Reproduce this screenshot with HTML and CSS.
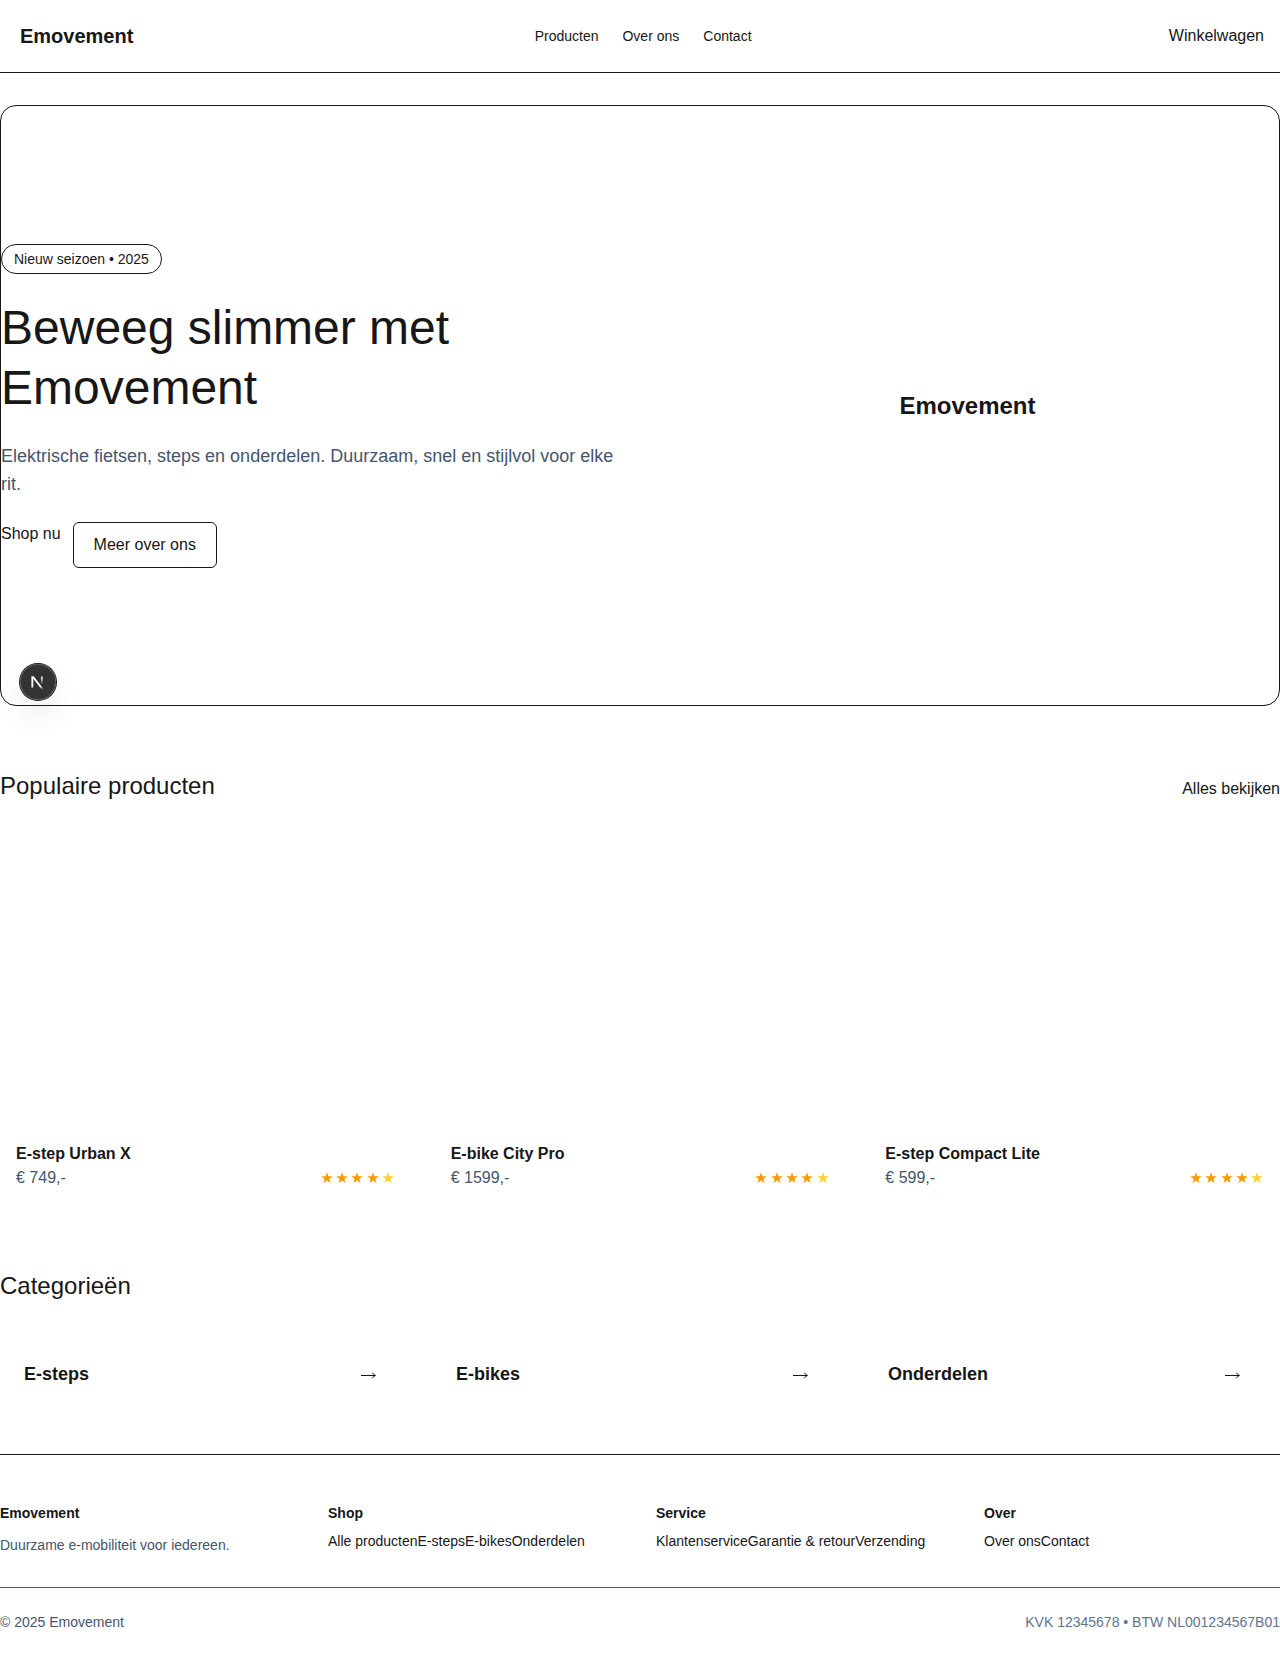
FILE: index.html
```html
<!DOCTYPE html>
<html lang="nl">
<head>
<meta charset="utf-8">
<title>Emovement</title>
<link rel="stylesheet" href="styles.css">
</head>
<body>
<header class="header">
  <a class="brand">Emovement</a>
  <nav class="nav"><a>Producten</a><a>Over ons</a><a>Contact</a></nav>
  <a class="cart">Winkelwagen</a>
</header>
<main class="main">
  <section class="hero">
    <div class="hero-copy">
      <span class="pill">Nieuw seizoen • 2025</span>
      <h1 class="hero-title">Beweeg slimmer met Emovement</h1>
      <p class="hero-text">Elektrische fietsen, steps en onderdelen. Duurzaam, snel en stijlvol voor elke rit.</p>
      <div class="hero-actions"><a>Shop nu</a><a class="button">Meer over ons</a></div>
    </div>
    <div class="hero-visual">Emovement</div>
  </section>

  <section class="section">
    <div class="section-head"><h2 class="section-title">Populaire producten</h2><a>Alles bekijken</a></div>
    <div class="products">
      <article class="product">
        <div class="product-image"></div>
        <div class="product-body">
          <h3 class="product-name">E-step Urban X</h3>
          <div class="product-row"><span class="price">€ 749,-</span><span class="stars"><svg class="star"><use href="#star"/></svg><svg class="star"><use href="#star"/></svg><svg class="star"><use href="#star"/></svg><svg class="star"><use href="#star"/></svg><svg class="star star-dim"><use href="#star"/></svg></span></div>
        </div>
      </article>
      <article class="product">
        <div class="product-image"></div>
        <div class="product-body">
          <h3 class="product-name">E-bike City Pro</h3>
          <div class="product-row"><span class="price">€ 1599,-</span><span class="stars"><svg class="star"><use href="#star"/></svg><svg class="star"><use href="#star"/></svg><svg class="star"><use href="#star"/></svg><svg class="star"><use href="#star"/></svg><svg class="star star-dim"><use href="#star"/></svg></span></div>
        </div>
      </article>
      <article class="product">
        <div class="product-image"></div>
        <div class="product-body">
          <h3 class="product-name">E-step Compact Lite</h3>
          <div class="product-row"><span class="price">€ 599,-</span><span class="stars"><svg class="star"><use href="#star"/></svg><svg class="star"><use href="#star"/></svg><svg class="star"><use href="#star"/></svg><svg class="star"><use href="#star"/></svg><svg class="star star-dim"><use href="#star"/></svg></span></div>
        </div>
      </article>
    </div>
  </section>

  <section class="section">
    <h2 class="section-title">Categorieën</h2>
    <div class="categories">
      <a class="category"><span class="category-name">E-steps</span><svg class="arrow"><use href="#arrow"/></svg></a>
      <a class="category"><span class="category-name">E-bikes</span><svg class="arrow"><use href="#arrow"/></svg></a>
      <a class="category"><span class="category-name">Onderdelen</span><svg class="arrow"><use href="#arrow"/></svg></a>
    </div>
  </section>
</main>
<footer class="footer">
  <div class="footer-grid">
    <div><h4 class="footer-title">Emovement</h4><p class="footer-text">Duurzame e-mobiliteit voor iedereen.</p></div>
    <div><h4 class="footer-title">Shop</h4><div class="footer-links"><a>Alle producten</a><a>E-steps</a><a>E-bikes</a><a>Onderdelen</a></div></div>
    <div><h4 class="footer-title">Service</h4><div class="footer-links"><a>Klantenservice</a><a>Garantie &amp; retour</a><a>Verzending</a></div></div>
    <div><h4 class="footer-title">Over</h4><div class="footer-links"><a>Over ons</a><a>Contact</a></div></div>
  </div>
  <div class="footer-bottom"><span>© 2025 Emovement</span><span class="legal">KVK 12345678 • BTW NL001234567B01</span></div>
</footer>
<div class="dev-badge">
  <svg width="40" height="40" viewBox="0 0 40 40" fill="none">
    <defs>
      <symbol id="star" viewBox="0 0 12 12"><path fill="currentColor" d="M6 .2 7.4 4.3H11.7L8.3 6.9 9.5 11 6 8.5 2.5 11 3.7 6.9.3 4.3H4.6Z"/></symbol>
      <symbol id="arrow" viewBox="0 0 16 10"><path fill="none" stroke="currentColor" d="M1 6.5H15.3M12.3 3.7Q13.3 5.7 15.4 6.5 13.3 7.3 12.3 9.3"/></symbol>
      <linearGradient id="diag" x1="9.956" y1="11.123" x2="15.478" y2="17.967" gradientUnits="userSpaceOnUse">
        <stop stop-color="#fff"/><stop offset=".604" stop-color="#fff" stop-opacity="0"/>
      </linearGradient>
      <linearGradient id="stem" x1="11.822" y1="1.4" x2="11.791" y2="9.625" gradientUnits="userSpaceOnUse">
        <stop stop-color="#fff"/><stop offset="1" stop-color="#fff" stop-opacity="0"/>
      </linearGradient>
      <clipPath id="cut"><rect x="0" y="1.2" width="16" height="12.6"/></clipPath>
    </defs>
    <g transform="translate(12 13)" stroke-width="1.86" clip-path="url(#cut)">
      <path d="M13.3 15.2 2.34 1V12.6" stroke="url(#diag)"/>
      <path d="M11.825 1.5V13.1" stroke="url(#stem)"/>
    </g>
  </svg>
</div>
</body>
</html>
```
FILE: styles.css
```css
* { box-sizing: border-box; }

body {
  margin: 0;
  background: #fff;
  color: #171717;
  font: 16px/24px "Liberation Sans", Arial, sans-serif;
}

h1, h2, h3, h4, p { margin: 0; font-weight: 400; }

.header {
  display: flex;
  align-items: center;
  justify-content: space-between;
  height: 73px;
  padding-left: 20px;
  border-bottom: 1px solid #171717;
}
.brand { font-size: 20px; line-height: 28px; font-weight: 700; }
.nav { display: flex; gap: 24px; font-size: 14px; line-height: 20px; }
.cart { padding: 0 16px; }

.main { padding: 32px 0; }

.hero {
  display: grid;
  grid-template-columns: 1fr 1fr;
  gap: 32px;
  align-items: center;
  height: 601px;
  border: 1px solid #171717;
  border-radius: 16px;
}
.hero-copy { display: flex; flex-direction: column; align-items: flex-start; gap: 24px; }
.pill {
  padding: 4px 12px;
  border: 1px solid #171717;
  border-radius: 15px;
  font-size: 14px;
  line-height: 20px;
}
.hero-title { font-size: 48px; line-height: 60px; }
.hero-text { color: #45556c; font-size: 18px; line-height: 28px; }
.hero-actions { display: flex; align-items: flex-start; gap: 12px; }
.button { padding: 10px 20px; border: 1px solid #171717; border-radius: 6px; }
.hero-visual { text-align: center; font-size: 24px; line-height: 32px; font-weight: 700; }

.section { padding-top: 64px; }
.section-head { display: flex; align-items: baseline; justify-content: space-between; }
.section-title { font-size: 24px; line-height: 32px; }

.products { display: grid; grid-template-columns: repeat(3, 1fr); gap: 24px; margin-top: 24px; }
.product-image { height: 300px; }
.product-body { padding: 16px; }
.product-name { font-size: 16px; line-height: 24px; font-weight: 700; }
.product-row { display: flex; align-items: center; justify-content: space-between; }
.price { color: #45556c; }
.stars { display: flex; gap: 3.36px; padding-right: 0.6px; color: #fe9a00; }
.star { width: 12px; height: 12px; }
.star-dim { color: #ffd230; }

.categories { display: grid; grid-template-columns: repeat(3, 1fr); gap: 16px; margin-top: 24px; }
.category {
  display: flex;
  align-items: center;
  justify-content: space-between;
  height: 96px;
  padding: 0 40px 0 24px;
}
.category-name { font-size: 18px; line-height: 28px; font-weight: 700; }
.arrow { width: 16px; height: 10px; }

.footer { border-top: 1px solid #171717; font-size: 14px; line-height: 20px; }
.footer-grid {
  display: grid;
  grid-template-columns: repeat(4, 1fr);
  gap: 32px;
  padding: 48px 0 32px;
}
.footer-title { font-size: 14px; font-weight: 700; }
.footer-text { margin-top: 12px; color: #45556c; }
.footer-links { display: flex; margin-top: 8px; }
.footer-bottom {
  display: flex;
  justify-content: space-between;
  padding: 24px 0 48px;
  border-top: 1px solid #45556c;
  color: #45556c;
}
.legal { color: #62748e; }

/* Floating development indicator over the page */
.dev-badge {
  position: absolute;
  left: 20px;
  top: 664px;
  display: flex;
  align-items: center;
  justify-content: center;
  width: 36px;
  height: 36px;
  border-radius: 50%;
  background: rgba(0, 0, 0, 0.8);
  box-shadow: 0 0 0 1px #171717, inset 0 0 0 1px hsla(0, 0%, 100%, 0.14), 0 16px 32px -8px rgba(0, 0, 0, 0.24);
}
.dev-badge svg { flex: none; }
```
